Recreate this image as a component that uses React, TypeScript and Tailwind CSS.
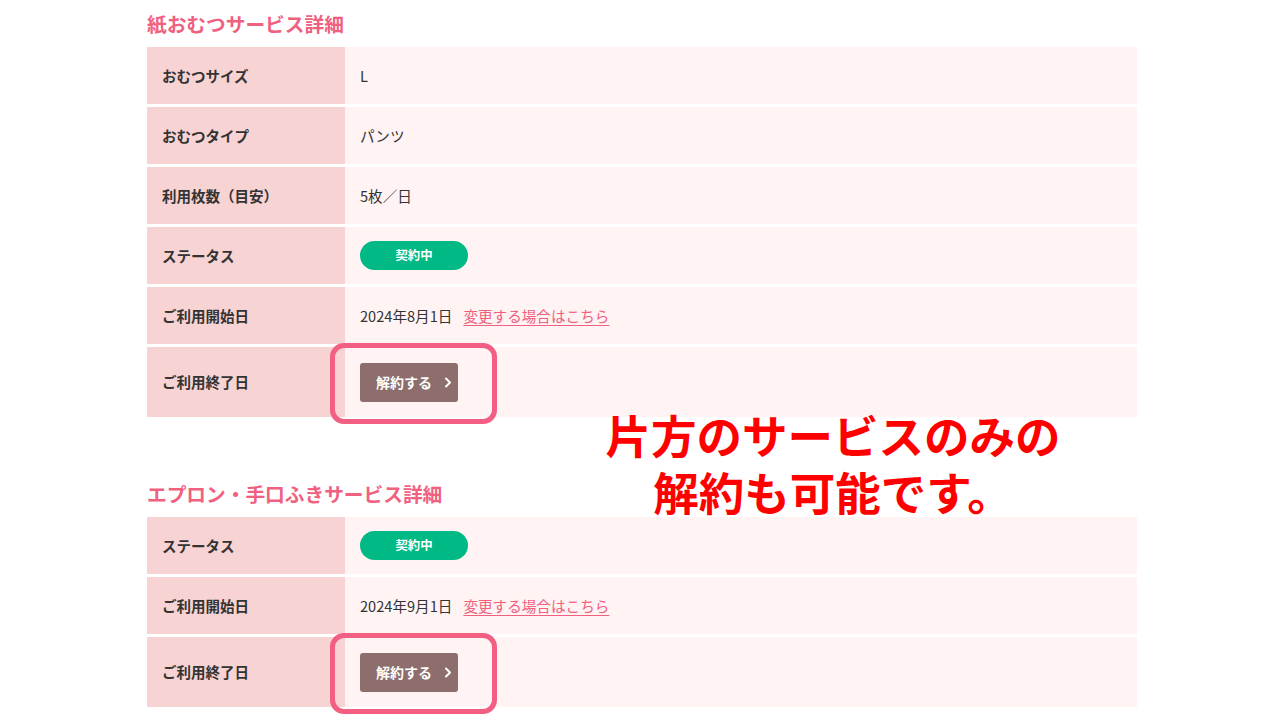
import React from "react";

const font = { fontFamily: '"Noto Sans CJK JP", "Noto Sans", sans-serif' };

function Chevron() {
  return (
    <svg width="8" height="11" viewBox="0 0 8 11" fill="none" className="ml-[12px]">
      <path d="M2 1.5 L6 5.5 L2 9.5" stroke="white" strokeWidth="2" strokeLinecap="round" strokeLinejoin="round" />
    </svg>
  );
}

function Row({ label, children, tall }: { label: string; children: React.ReactNode; tall?: boolean }) {
  return (
    <div className={`flex ${tall ? "h-[70px]" : "h-[57px]"}`}>
      <div className="w-[198px] shrink-0 bg-[#f8d3d3] flex items-center pl-[15px] text-[14.5px] font-bold text-[#333333]">
        {label}
      </div>
      <div className="flex-1 bg-[#fff3f3] flex items-center pl-[15px] text-[14.6px] text-[#333333]">{children}</div>
    </div>
  );
}

function Badge() {
  return (
    <span className="inline-flex items-center justify-center w-[108px] h-[29px] rounded-full bg-[#00b984] text-white text-[12.4px] font-bold">
      契約中
    </span>
  );
}

function CancelButton() {
  return (
    <div className="relative">
      <div className="absolute left-[-30px] top-[-20px] w-[167px] h-[81px] border-[5px] border-[#f25f82] rounded-[14px]" />
      <button className="relative flex items-center w-[98px] h-[39px] rounded-[3px] bg-[#8d6e6c] text-white text-[14px] font-bold pl-[16px]">
        解約する
        <Chevron />
      </button>
    </div>
  );
}

function StartDate({ date }: { date: string }) {
  return (
    <span className="flex items-center">
      <span>{date}</span>
      <a className="ml-[11px] text-[#f0607f] underline underline-offset-[3px]">変更する場合はこちら</a>
    </span>
  );
}

export default function App() {
  return (
    <div className="relative w-[1280px] h-[720px] bg-white overflow-hidden" style={font}>
      <div className="ml-[147px] w-[990px] pt-[10px]">
        <h2 className="text-[19.7px] leading-[28px] font-bold text-[#f0607f] mb-[9px]">紙おむつサービス詳細</h2>
        <div className="flex flex-col gap-[3px]">
          <Row label="おむつサイズ">L</Row>
          <Row label="おむつタイプ">パンツ</Row>
          <Row label="利用枚数（目安）">5枚／日</Row>
          <Row label="ステータス">
            <Badge />
          </Row>
          <Row label="ご利用開始日">
            <StartDate date="2024年8月1日" />
          </Row>
          <Row label="ご利用終了日" tall>
            <CancelButton />
          </Row>
        </div>

        <h2 className="mt-[63px] text-[19.7px] leading-[28px] font-bold text-[#f0607f] mb-[9px]">エプロン・手口ふきサービス詳細</h2>
        <div className="flex flex-col gap-[3px]">
          <Row label="ステータス">
            <Badge />
          </Row>
          <Row label="ご利用開始日">
            <StartDate date="2024年9月1日" />
          </Row>
          <Row label="ご利用終了日" tall>
            <CancelButton />
          </Row>
        </div>
      </div>

      <div className="absolute left-[533px] top-[406px] w-[600px] flex flex-col items-center text-[45.5px] font-bold text-[#ff0000]">
        <div className="h-[57px] leading-[57px]">片方のサービスのみの</div>
        <div className="h-[57px] leading-[57px]">解約も可能です。</div>
      </div>
    </div>
  );
}
